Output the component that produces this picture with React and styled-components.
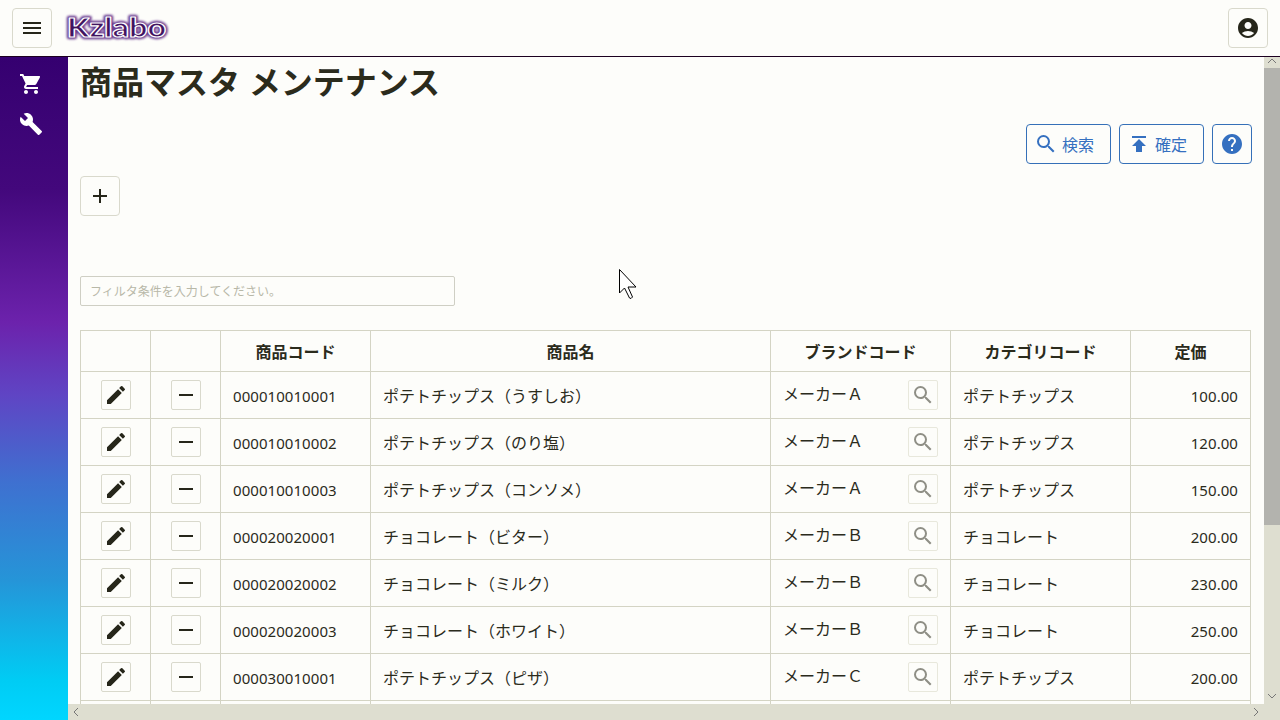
import React from "react";
import styled, { createGlobalStyle, css } from "styled-components";
import {
  MdMenu, MdShoppingCart, MdBuild, MdAccountCircle, MdSearch,
  MdPublish, MdHelp, MdAdd, MdRemove, MdEdit,
} from "react-icons/md";

const GlobalStyle = createGlobalStyle`
  * { box-sizing: border-box; }
  body { margin: 0; overflow: hidden; background: #fdfdfa; color: #2b2b1c;
    font: 16px/24px "Noto Sans CJK JP", "Noto Sans", sans-serif; }
  svg { display: block; flex: none; }
`;

const Page = styled.div`
  position: relative;
  width: 1280px;
  height: 720px;
  display: flex;
  flex-direction: column;
  overflow: hidden;
`;
const Header = styled.header`
  height: 57px;
  flex: none;
  display: flex;
  align-items: flex-start;
  padding: 8px 12px 0;
  border-bottom: 1px solid #1c0020;
`;
const Logo = styled.svg`
  margin-left: 8px;
  overflow: visible;
`;
const Spacer = styled.div`
  flex: 1;
`;
const Button = styled.button`
  width: ${(p) => (p.$wide ? "85px" : p.$small ? "30px" : "40px")};
  height: ${(p) => (p.$small ? 30 : 40)}px;
  padding: ${(p) => (p.$wide ? "0 9px 0 0" : "0")};
  display: flex;
  align-items: center;
  justify-content: center;
  gap: 4px;
  font: inherit;
  background: transparent;
  border: 1px solid #d9d9cc;
  border-radius: ${(p) => (p.$small ? 2 : 4)}px;
  color: #26261a;
  ${(p) => p.$primary && css`
    color: #3570c0;
    border-color: #3570b8;
  `}
  ${(p) => p.$muted && css`
    color: #8f8f86;
    border-color: #e8e8dc;
  `}
`;
const Body = styled.div`
  flex: 1;
  min-height: 0;
  display: flex;
`;
const Sidebar = styled.nav`
  width: 68px;
  flex: none;
  display: flex;
  flex-direction: column;
  gap: 16px;
  padding: 15px 0 0 19px;
  color: #fff;
  background: linear-gradient(#350070 0%, #43087c 20%, #6c22ac 40%, #5f45c4 51%, #3f70d0 64%, #2595d8 79%, #00ccf4 94%, #00d6ff 100%);
`;
const Main = styled.main`
  flex: 1;
  min-width: 0;
  display: flex;
  flex-direction: column;
`;
const Viewport = styled.div`
  flex: 1;
  min-height: 0;
  display: flex;
`;
const Content = styled.section`
  flex: 1;
  min-width: 0;
  overflow: hidden;
  padding: 0 12px;
`;
const Title = styled.h1`
  margin: 0 0 20px;
  font-size: 32px;
  line-height: 47px;
  font-weight: 700;
  word-spacing: 1.5px;
`;
const Actions = styled.div`
  display: flex;
  justify-content: flex-end;
  gap: 8px;
  margin-bottom: 12px;
`;
const Filter = styled.input`
  display: block;
  width: 375px;
  height: 30px;
  margin: 60px 0 24px;
  padding: 0 9px 2px;
  font: 12px "Noto Sans CJK JP", sans-serif;
  background: transparent;
  border: 1px solid #cfcfc4;
  border-radius: 2px;
  &::placeholder { color: #b8b8a8; opacity: 1; }
`;
const Table = styled.div`
  width: 1171px;
  border-top: 1px solid #d4d4c4;
  border-left: 1px solid #d4d4c4;
`;
const Row = styled.div`
  display: grid;
  grid-template-columns: 70px 70px 150px 400px 180px 180px 120px;
  height: ${(p) => (p.$head ? 41 : 47)}px;
  font-weight: ${(p) => (p.$head ? 700 : 400)};
`;
const Cell = styled.div`
  display: flex;
  align-items: center;
  justify-content: ${(p) => p.$align || "flex-start"};
  padding: 0 12px;
  border-right: 1px solid #d4d4c4;
  border-bottom: 1px solid #d4d4c4;
  white-space: nowrap;
`;
const Numeric = styled.span`
  font-family: "Noto Sans", sans-serif;
  font-size: 15px;
  letter-spacing: 0.06px;
  padding-top: 2px;
`;
const Label = styled.span`
  padding-bottom: ${(p) => (p.$raised ? 5 : 0)}px;
`;
const VerticalBar = styled.div`
  width: 16px;
  flex: none;
  display: flex;
  flex-direction: column;
  align-items: center;
  padding: 0 0 3px;
  background: #deded0;
  color: #777;
`;
const Thumb = styled.div`
  width: 16px;
  height: 457px;
  margin-top: 2px;
  background: #b3b3ae;
`;
const HorizontalBar = styled.div`
  height: 16px;
  flex: none;
  display: flex;
  align-items: center;
  justify-content: space-between;
  padding: 0 19px 0 3px;
  background: #deded0;
  color: #777;
`;
const Pointer = styled.svg`
  position: absolute;
  left: 618px;
  top: 268px;
`;

const arrows = {
  up: "M1 6L5 2L9 6",
  down: "M1 3L5 7L9 3",
  left: "M7 1L3 5L7 9",
  right: "M3 1L7 5L3 9",
};
const Chevron = ({ dir }) => (
  <svg width="10" height={dir === "up" ? 9 : 10} viewBox={dir === "up" ? "0 0 10 9" : "0 0 10 10"} fill="none" stroke="currentColor">
    <path d={arrows[dir]} />
  </svg>
);

const products = [
  ["000010010001", "ポテトチップス（うすしお）", "メーカーＡ", "ポテトチップス", "100.00"],
  ["000010010002", "ポテトチップス（のり塩）", "メーカーＡ", "ポテトチップス", "120.00"],
  ["000010010003", "ポテトチップス（コンソメ）", "メーカーＡ", "ポテトチップス", "150.00"],
  ["000020020001", "チョコレート（ビター）", "メーカーＢ", "チョコレート", "200.00"],
  ["000020020002", "チョコレート（ミルク）", "メーカーＢ", "チョコレート", "230.00"],
  ["000020020003", "チョコレート（ホワイト）", "メーカーＢ", "チョコレート", "250.00"],
  ["000030010001", "ポテトチップス（ピザ）", "メーカーＣ", "ポテトチップス", "200.00"],
];
const headings = ["", "", "商品コード", "商品名", "ブランドコード", "カテゴリコード", "定価"];

const ProductRow = ({ item: [code, name, brand, category, price] }) => (
  <Row>
    <Cell $align="center"><Button $small><MdEdit size={24} /></Button></Cell>
    <Cell $align="center"><Button $small><MdRemove size={24} /></Button></Cell>
    <Cell><Numeric>{code}</Numeric></Cell>
    <Cell><Label>{name}</Label></Cell>
    <Cell $align="space-between">
      <Label $raised>{brand}</Label>
      <Button $small $muted><MdSearch size={24} /></Button>
    </Cell>
    <Cell><Label>{category}</Label></Cell>
    <Cell $align="flex-end"><Numeric>{price}</Numeric></Cell>
  </Row>
);

export default function App() {
  return (
    <Page>
      <GlobalStyle />
      <Header>
        <Button><MdMenu size={24} /></Button>
        <Logo width="112" height="40" viewBox="0 0 112 40">
          <defs>
            <filter id="glow" x="-20%" y="-40%" width="140%" height="180%">
              <feGaussianBlur stdDeviation="1.1" />
            </filter>
          </defs>
          <g fontFamily="Lato, sans-serif" fontWeight="900" fontSize="27" strokeLinejoin="round">
            <text x="7" y="29" textLength="99" lengthAdjust="spacingAndGlyphs" fill="#6a3c90" stroke="#6a3c90" strokeWidth="4.5" filter="url(#glow)">Kzlabo</text>
            <text x="7" y="29" textLength="99" lengthAdjust="spacingAndGlyphs" fill="#40145f" stroke="#fff" strokeWidth="1.2" aria-hidden="true">Kzlabo</text>
          </g>
        </Logo>
        <Spacer />
        <Button><MdAccountCircle size={24} /></Button>
      </Header>
      <Body>
        <Sidebar>
          <MdShoppingCart size={24} />
          <MdBuild size={24} />
        </Sidebar>
        <Main>
          <Viewport>
            <Content>
              <Title>商品マスタ メンテナンス</Title>
              <Actions>
                <Button $wide $primary><MdSearch size={24} />検索</Button>
                <Button $wide $primary><MdPublish size={24} />確定</Button>
                <Button $primary><MdHelp size={24} /></Button>
              </Actions>
              <Button><MdAdd size={24} /></Button>
              <Filter placeholder="フィルタ条件を入力してください。" />
              <Table>
                <Row $head>
                  {headings.map((h, i) => <Cell key={i} $align="center"><Label>{h}</Label></Cell>)}
                </Row>
                {products.map((p) => <ProductRow key={p[0]} item={p} />)}
                <Row>{headings.map((_, i) => <Cell key={i} />)}</Row>
              </Table>
            </Content>
            <VerticalBar>
              <Chevron dir="up" />
              <Thumb />
              <Spacer />
              <Chevron dir="down" />
            </VerticalBar>
          </Viewport>
          <HorizontalBar>
            <Chevron dir="left" />
            <Chevron dir="right" />
          </HorizontalBar>
        </Main>
      </Body>
      <Pointer width="20" height="32" viewBox="0 0 20 32">
        <path d="M1.5 1.5V25L6.5 20L11.5 30Q13 31.5 14.5 29L10 19H18Z" fill="#fff" stroke="#000" />
      </Pointer>
    </Page>
  );
}
